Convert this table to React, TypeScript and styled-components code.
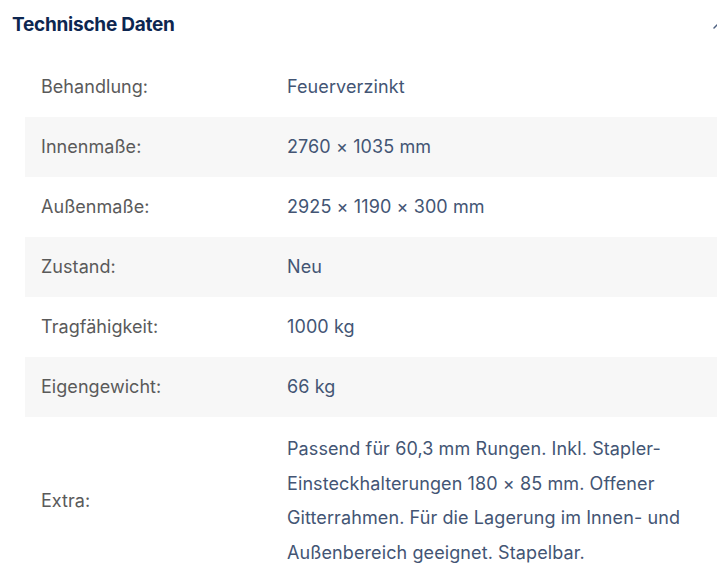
import React from "react";
import styled, { createGlobalStyle } from "styled-components";

const Global = createGlobalStyle`
  html, body { margin: 0; padding: 0; background: #ffffff; overflow: hidden; }
  body { font-family: Inter, "Noto Sans", sans-serif; -webkit-font-smoothing: antialiased; }
`;

const Section = styled.section`
  width: 733px;
  display: flex;
  flex-direction: column;
`;

const Header = styled.div`
  display: flex;
  align-items: center;
  justify-content: space-between;
  height: 48px;
  padding: 0 7px 0 12px;
`;

const Title = styled.h2`
  margin: 0;
  font-size: 19px;
  font-weight: 700;
  color: #0d2650;
  letter-spacing: -0.25px;
`;

const Chevron = styled.svg`
  width: 16px;
  height: 16px;
  color: #4d6080;
  margin-top: 3px;
`;

const Table = styled.div`
  display: flex;
  flex-direction: column;
  margin: 9px 0 0 25px;
`;

const Row = styled.div<{ $alt?: boolean }>`
  display: grid;
  grid-template-columns: 246px 1fr;
  align-items: center;
  padding: 15px 16px;
  min-height: 30px;
  background: ${(p) => (p.$alt ? "#f7f7f7" : "#ffffff")};
`;

const Label = styled.div`
  font-size: 18px;
  line-height: 30px;
  color: #5a5a5a;
  letter-spacing: 0.05px;
`;

const Value = styled.div<{ $multi?: boolean }>`
  font-size: 18px;
  line-height: ${(p) => (p.$multi ? "34.7px" : "30px")};
  color: #435574;
  letter-spacing: 0.1px;
  max-width: 410px;
`;

const rows: [string, string][] = [
  ["Behandlung:", "Feuerverzinkt"],
  ["Innenmaße:", "2760 × 1035 mm"],
  ["Außenmaße:", "2925 × 1190 × 300 mm"],
  ["Zustand:", "Neu"],
  ["Tragfähigkeit:", "1000 kg"],
  ["Eigengewicht:", "66 kg"],
  [
    "Extra:",
    "Passend für 60,3 mm Rungen. Inkl. Stapler-Einsteckhalterungen 180 × 85 mm. Offener Gitterrahmen. Für die Lagerung im Innen- und Außenbereich geeignet. Stapelbar.",
  ],
];

export default function App() {
  return (
    <>
      <Global />
      <Section>
        <Header>
          <Title>Technische Daten</Title>
          <Chevron viewBox="0 0 24 24" fill="none" stroke="currentColor" strokeWidth={2.2} strokeLinecap="round" strokeLinejoin="round">
            <path d="M6 15l6-6 6 6" />
          </Chevron>
        </Header>
        <Table>
          {rows.map(([l, v], i) => (
            <Row key={l} $alt={i % 2 === 1}>
              <Label>{l}</Label>
              <Value $multi={i === rows.length - 1}>{v}</Value>
            </Row>
          ))}
        </Table>
      </Section>
    </>
  );
}
